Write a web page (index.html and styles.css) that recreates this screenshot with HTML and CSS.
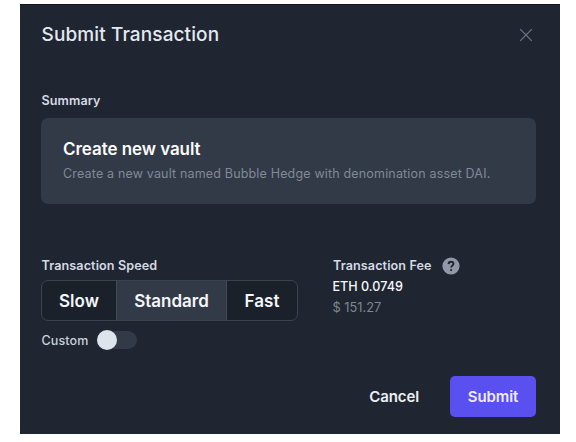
FILE: index.html
```html
<!DOCTYPE html>
<html lang="en">
<head>
<meta charset="utf-8">
<title>Submit Transaction</title>
<link rel="stylesheet" href="styles.css">
</head>
<body>
<main class="modal">
  <header class="header">
    <h1 class="title"><span>Submit Transaction</span></h1>
    <svg class="close" viewBox="0 0 14 14" aria-label="Close"><path d="M1.2 1.2 12.8 12.8M12.8 1.2 1.2 12.8"/></svg>
  </header>
  <section class="summary">
    <h2 class="label"><span>Summary</span></h2>
    <div class="card">
      <h3 class="card-title"><span>Create new vault</span></h3>
      <p class="card-text"><span>Create a new vault named Bubble Hedge with denomination asset DAI.</span></p>
    </div>
  </section>
  <section class="details">
    <div class="speed">
      <h2 class="label label-speed"><span>Transaction Speed</span></h2>
      <div class="segments">
        <button class="segment slow"><span>Slow</span></button>
        <button class="segment standard"><span>Standard</span></button>
        <button class="segment fast"><span>Fast</span></button>
      </div>
      <div class="custom"><span class="custom-label">Custom</span><span class="toggle"><span class="knob"></span></span></div>
    </div>
    <div class="fee">
      <h2 class="label label-fee"><span>Transaction Fee</span>
        <svg class="help" viewBox="0 0 18 18"><circle cx="9" cy="9" r="8.6"/><path d="M6.5 7.1C6.6 5.5 7.6 4.7 9 4.7c1.5 0 2.5.9 2.5 2.1 0 1.7-2.3 1.7-2.3 3.6"/><circle class="dot" cx="9.1" cy="13" r="1.1"/></svg>
      </h2>
      <p class="eth"><span>ETH 0.0749</span></p>
      <p class="usd"><span>$ 151.27</span></p>
    </div>
  </section>
  <footer class="footer">
    <button class="cancel"><span>Cancel</span></button>
    <button class="submit"><span>Submit</span></button>
  </footer>
</main>
</body>
</html>
```
FILE: styles.css
```css
* { box-sizing: border-box; margin: 0; }
body { background: #fff; font-family: Inter, "Liberation Sans", sans-serif; overflow: hidden; }
button { border: 0; padding: 0; background: none; font: inherit; color: inherit; }
.modal {
  display: flex; flex-direction: column;
  width: 540px; height: 430px; margin: 4px 0 0 20px; padding: 0 24px 17px 21px;
  background: #1f2531; border-top: 1px solid #11151d; color: #e4e8ef;
}
.header { display: flex; justify-content: space-between; align-items: center; height: 60px; padding: 0 3px 0 0.5px; }
.title { font-size: 19px; font-weight: 500; line-height: 24px; letter-spacing: 0.12px; white-space: nowrap; }
.close { width: 14px; height: 14px; fill: none; stroke: #717986; stroke-width: 1.2; }
.summary { padding-top: 28px; }
.label { padding-left: 0.5px; font-size: 12.6px; font-weight: 600; line-height: 16px; letter-spacing: 0.1px; color: #d5dae3; white-space: nowrap; }
.card { height: 86px; margin-top: 9px; padding: 20px 22px; background: #333a47; border-radius: 7px; }
.card-title { font-size: 17px; font-weight: 600; line-height: 22px; letter-spacing: -0.06px; color: #fafbfd; white-space: nowrap; }
.card-text { margin-top: 5px; font-size: 12.5px; line-height: 18px; letter-spacing: 0.17px; color: #808998; white-space: nowrap; }
.details { display: flex; padding-top: 54px; }
.speed { width: 291px; }
.segments { display: flex; width: 257px; height: 41px; margin-top: 6px; border: 1px solid #3c4350; border-radius: 7px; overflow: hidden; background: #1b212b; }
.segment { font-size: 17px; font-weight: 600; color: #f4f6fa; white-space: nowrap; }
.slow { width: 74px; }
.standard { width: 111px; background: #333a47; border: solid #424956; border-width: 0 1px; }
.fast { flex: 1; }
.custom { display: flex; align-items: center; gap: 9px; height: 20px; margin-top: 9px; padding-left: 0.5px; }
.custom-label { font-size: 12.5px; font-weight: 500; letter-spacing: 0.12px; color: #cbd1db; }
.toggle { display: flex; align-items: center; width: 40px; height: 18px; border-radius: 9px; background: #333a47; }
.knob { width: 20px; height: 20px; flex: none; border-radius: 50%; background: #dee4ec; }
.fee { padding-left: 0.5px; }
.label-fee { display: flex; align-items: center; gap: 10px; }
.help { width: 18px; height: 18px; margin: -1px 0; fill: #9299a6; }
.help path { fill: none; stroke: #1f2531; stroke-width: 1.9; }
.help .dot { fill: #1f2531; }
.eth { margin-top: 4px; font-size: 12.6px; font-weight: 500; line-height: 18px; color: #f7f9fc; }
.usd { margin-top: 3px; font-size: 12.8px; line-height: 18px; color: #808794; }
.footer { display: flex; justify-content: flex-end; align-items: center; gap: 31px; margin-top: auto; height: 41px; }
.cancel { font-size: 15px; font-weight: 600; letter-spacing: -0.1px; color: #eceff4; }
.submit { width: 86px; height: 41px; background: #5a50ef; border-radius: 5px; font-size: 15px; font-weight: 600; letter-spacing: -0.1px; color: #eeeaff; }
```
